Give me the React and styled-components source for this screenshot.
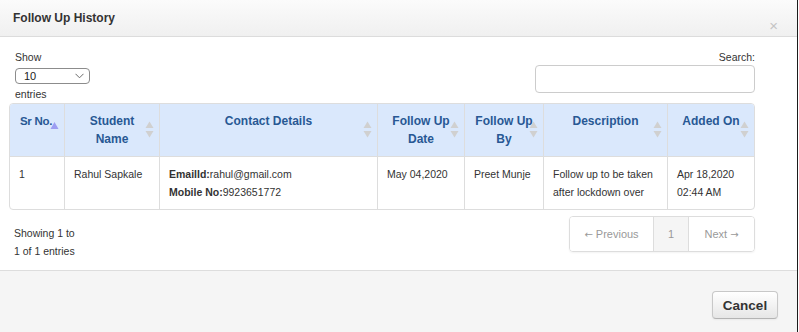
import React from "react";
import styled, { createGlobalStyle } from "styled-components";

const Global = createGlobalStyle`
  html, body { margin: 0; padding: 0; background: #fff; }
  body { font-family: "Liberation Sans", Arial, sans-serif; color: #333; }
  * { box-sizing: border-box; }
`;

const Modal = styled.div`
  width: 798px;
  border-right: 1px solid #1c1c1c;
  display: flex;
  flex-direction: column;
  background: #fff;
`;

const Header = styled.div`
  height: 37px;
  border-bottom: 1px solid #dcdcdc;
  background: linear-gradient(to bottom, #fbfbfb, #f0f0f0);
  display: flex;
  align-items: center;
  justify-content: space-between;
  padding: 0 19px 0 13px;
`;

const Title = styled.h3`
  margin: 0;
  font-size: 12px;
  font-weight: 700;
  color: #333;
  line-height: 16px;
`;

const Close = styled.button`
  align-self: flex-end;
  margin-bottom: 3px;
  border: none;
  background: none;
  padding: 0;
  font-family: "Liberation Sans", Arial, sans-serif;
  font-size: 15px;
  line-height: 14px;
  color: #c4c4c4;
`;

const Body = styled.div`
  padding: 13px 42px 10px 9px;
  font-size: 10.5px;
`;

const Controls = styled.div`
  display: flex;
  justify-content: space-between;
  align-items: flex-start;
`;

const LengthControl = styled.div`
  display: flex;
  flex-direction: column;
  align-items: flex-start;
  margin-left: 6px;
  line-height: 14px;
`;

const SelectBox = styled.div`
  width: 75px;
  height: 16px;
  margin: 4px 0 3px;
  border: 1px solid #8c8c8c;
  border-radius: 4px;
  display: flex;
  align-items: center;
  justify-content: space-between;
  padding: 0 5px 0 8px;
  font-size: 11px;
  color: #222;
`;

const SearchControl = styled.label`
  display: flex;
  flex-direction: column;
  align-items: flex-end;
  line-height: 14px;
`;

const SearchInput = styled.input`
  width: 220px;
  height: 28px;
  margin-top: 1px;
  border: 1px solid #ccc;
  border-radius: 4px;
  outline: none;
`;

const TableWrap = styled.div`
  margin-top: 2px;
  border: 1px solid #dddddd;
  border-radius: 4px;
  overflow: hidden;
`;

const Table = styled.table`
  width: 100%;
  border-collapse: separate;
  border-spacing: 0;
  table-layout: fixed;
`;

const Th = styled.th`
  position: relative;
  width: ${(p) => p.$w}px;
  background: #dae8fc;
  color: #285894;
  font-size: ${(p) => (p.$tight ? "11.5px" : "12px")};
  font-weight: 700;
  line-height: 18px;
  padding: ${(p) => (p.$tight ? "8px 4px 8px 10px" : "8px 10px")};
  white-space: ${(p) => (p.$tight ? "nowrap" : "normal")};
  letter-spacing: ${(p) => (p.$tight ? "-0.3px" : "0")};
  text-align: ${(p) => (p.$tight ? "left" : "center")};
  vertical-align: top;
  border-bottom: 1px solid #dddddd;
  & + & { border-left: 1px solid #dddddd; }
`;

const SortIcon = styled.svg`
  position: absolute;
  right: 5px;
  top: 17px;
`;

const Td = styled.td`
  font-size: 10.5px;
  line-height: 18px;
  padding: 8px 9px;
  vertical-align: top;
  color: #333;
  & + & { border-left: 1px solid #dddddd; }
`;

const Label = styled.b`
  font-weight: 700;
  color: #333;
`;

const BottomRow = styled.div`
  margin-top: 6px;
  display: flex;
  justify-content: space-between;
  align-items: flex-start;
`;

const Info = styled.div`
  margin: 8px 0 0 5px;
  line-height: 18px;
`;

const Pagination = styled.div`
  display: flex;
  border: 1px solid #dddddd;
  border-radius: 4px;
  box-shadow: 0 1px 2px rgba(0, 0, 0, 0.05);
  overflow: hidden;
`;

const PageItem = styled.span`
  width: ${(p) => p.$w}px;
  height: 34px;
  line-height: 34px;
  text-align: center;
  color: #999;
  font-size: 11px;
  background: ${(p) => (p.$active ? "#f5f5f5" : "#fff")};
  & + & { border-left: 1px solid #dddddd; }
`;

const Arrow = styled.span`
  font-family: "DejaVu Sans", sans-serif;
  font-size: 10px;
`;

const Footer = styled.div`
  border-top: 1px solid #dddddd;
  background: #f5f5f5;
  padding: 20px 19px 13px;
  display: flex;
  justify-content: flex-end;
`;

const Button = styled.button`
  width: 66px;
  height: 28px;
  border: 1px solid #c8c8c8;
  border-bottom-color: #b3b3b3;
  border-radius: 4px;
  background: linear-gradient(to bottom, #ffffff, #e6e6e6);
  box-shadow: inset 0 1px 0 rgba(255, 255, 255, 0.2), 0 1px 2px rgba(0, 0, 0, 0.05);
  font-family: "Liberation Sans", Arial, sans-serif;
  font-size: 13.5px;
  font-weight: 700;
  color: #333;
  padding: 0;
`;

const Both = () => (
  <SortIcon width="9" height="17" viewBox="0 0 9 17">
    <polygon points="4.5,0.5 8.5,7 0.5,7" fill="#d0d0d0" />
    <polygon points="0.5,10 8.5,10 4.5,16.5" fill="#d0d0d0" />
  </SortIcon>
);

const Asc = () => (
  <SortIcon width="9" height="17" viewBox="0 0 9 17">
    <polygon points="4.5,1 8.5,8 0.5,8" fill="#9d9df2" />
  </SortIcon>
);

const columns = [
  { label: "Sr No.", w: 54, asc: true },
  { label: "Student Name", w: 95 },
  { label: "Contact Details", w: 218 },
  { label: "Follow Up Date", w: 87 },
  { label: "Follow Up By", w: 79 },
  { label: "Description", w: 124 },
  { label: "Added On", w: 87 },
];

export default function App() {
  return (
    <>
      <Global />
      <Modal>
        <Header>
          <Title>Follow Up History</Title>
          <Close aria-label="close">×</Close>
        </Header>
        <Body>
          <Controls>
            <LengthControl>
              <span>Show</span>
              <SelectBox>
                <span>10</span>
                <svg width="9" height="6" viewBox="0 0 9 6">
                  <polyline points="0.5,0.8 4.5,4.8 8.5,0.8" fill="none" stroke="#6b6b6b" strokeWidth="1" />
                </svg>
              </SelectBox>
              <span>entries</span>
            </LengthControl>
            <SearchControl>
              <span>Search:</span>
              <SearchInput type="search" />
            </SearchControl>
          </Controls>
          <TableWrap>
            <Table>
              <thead>
                <tr>
                  {columns.map((c) => (
                    <Th key={c.label} $w={c.w} $tight={c.asc}>
                      {c.label}
                      {c.asc ? <Asc /> : <Both />}
                    </Th>
                  ))}
                </tr>
              </thead>
              <tbody>
                <tr>
                  <Td>1</Td>
                  <Td>Rahul Sapkale</Td>
                  <Td>
                    <Label>EmailId:</Label>rahul@gmail.com
                    <br />
                    <Label>Mobile No:</Label>9923651772
                  </Td>
                  <Td>May 04,2020</Td>
                  <Td>Preet Munje</Td>
                  <Td>Follow up to be taken after lockdown over</Td>
                  <Td>
                    Apr 18,2020
                    <br />
                    02:44 AM
                  </Td>
                </tr>
              </tbody>
            </Table>
          </TableWrap>
          <BottomRow>
            <Info>
              Showing 1 to
              <br />1 of 1 entries
            </Info>
            <Pagination>
              <PageItem $w={83}>
                <Arrow>←</Arrow> Previous
              </PageItem>
              <PageItem $w={35} $active>
                1
              </PageItem>
              <PageItem $w={66}>
                Next <Arrow>→</Arrow>
              </PageItem>
            </Pagination>
          </BottomRow>
        </Body>
        <Footer>
          <Button>Cancel</Button>
        </Footer>
      </Modal>
    </>
  );
}
